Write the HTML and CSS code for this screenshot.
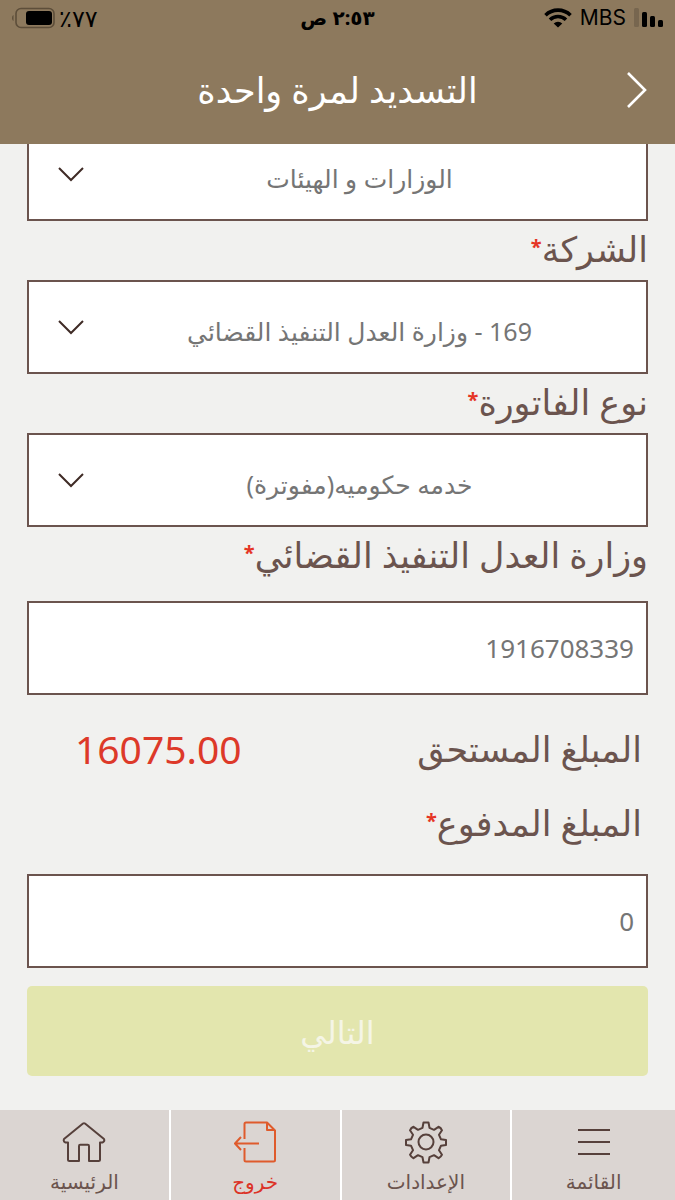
FILE: index.html
```html
<!DOCTYPE html>
<html lang="ar" dir="rtl">
<head>
<meta charset="utf-8">
<meta name="viewport" content="width=device-width, initial-scale=1">
<title>التسديد لمرة واحدة</title>
<link rel="stylesheet" href="styles.css">
</head>
<body>
<header class="header">
  <div class="status">
    <div class="status-side">
      <svg width="30" height="20" viewBox="0 0 30 20" aria-hidden="true"><rect x="0" y="0" width="5" height="19" rx="1.5" fill="#77664f"/><rect x="8" y="4" width="5" height="15" rx="1.5"/><rect x="16" y="8" width="5" height="11" rx="1.5"/><rect x="24" y="12" width="5" height="7" rx="1.5"/></svg>
      <span class="carrier">MBS</span>
      <svg width="28" height="20" viewBox="0 0 28 20" fill="none" stroke="#000" stroke-width="3.6" aria-hidden="true"><path d="M1.5 7.2a18 18 0 0 1 25 0M6 11.7a11.5 11.5 0 0 1 16 0"/><path d="M9.7 15.4a6.2 6.2 0 0 1 8.600 0L14 19.600z" fill="#000" stroke="none"/></svg>
    </div>
    <span class="clock">٢:٥٣ ص</span>
    <div class="status-side status-end">
      <span class="percent">٧٧٪</span>
      <svg width="44" height="22" viewBox="0 0 44 22" aria-hidden="true"><path d="M2.500 8v6C.6 13.500.6 8.500 2.500 8z" fill="#5d4e3a"/><rect x="5" y="1.500" width="38" height="19" rx="5" fill="none" stroke="#5d4e3a" stroke-width="1.600"/><rect x="15" y="4" width="26" height="14" rx="3"/></svg>
    </div>
  </div>
  <div class="titlebar">
    <button class="back" type="button" aria-label="رجوع"><svg width="22" height="38" viewBox="0 0 22 38" fill="none" stroke="#fff" stroke-width="2.600"><path d="M2 2l17 17L2 36"/></svg></button>
    <h1 class="title">التسديد لمرة واحدة</h1>
  </div>
</header>

<main class="main">
  <form class="form">
    <div class="picker">
      <select class="box select" aria-label="الفئة"><option>الوزارات و الهيئات</option></select>
      <svg class="chevron" viewBox="0 0 26 15" aria-hidden="true"><path d="M1 1l12 12L25 1"/></svg>
    </div>
    <label class="label" for="company">الشركة<span class="star">*</span></label>
    <div class="picker">
      <select class="box select" id="company"><option>169 - وزارة العدل التنفيذ القضائي</option></select>
      <svg class="chevron" viewBox="0 0 26 15" aria-hidden="true"><path d="M1 1l12 12L25 1"/></svg>
    </div>
    <label class="label" for="bill">نوع الفاتورة<span class="star">*</span></label>
    <div class="picker">
      <select class="box select" id="bill"><option>خدمه حكوميه(مفوترة)</option></select>
      <svg class="chevron" viewBox="0 0 26 15" aria-hidden="true"><path d="M1 1l12 12L25 1"/></svg>
    </div>
    <label class="label label-tall" for="number">وزارة العدل التنفيذ القضائي<span class="star">*</span></label>
    <input class="box input" id="number" type="text" inputmode="numeric" value="1916708339">
    <div class="amounts">
      <div class="due"><span>المبلغ المستحق</span><output class="due-value">16075.00</output></div>
      <label class="paid" for="paid">المبلغ المدفوع<span class="star">*</span></label>
    </div>
    <input class="box input" id="paid" type="text" inputmode="decimal" value="0">
    <button class="next" type="button">التالي</button>
  </form>
</main>

<nav class="nav">
  <a class="tab" href="#menu">
    <svg class="icon" viewBox="0 0 44 44" aria-hidden="true"><path d="M6 10h32M6 22h32M6 34h32"/></svg>
    <span>القائمة</span>
  </a>
  <a class="tab" href="#settings">
    <svg class="icon" viewBox="0 0 44 44" aria-hidden="true"><circle cx="22" cy="22" r="7.500"/><path d="M19.500 2.500h5l1 5.300 4.500 2 4.500-3q2.500 1 3.500 3.500l-3 4.500 2 4.500 5 .7v5l-5 .7-2 4.500 3 4.500q-1 2.500-3.500 3.500l-4.500-3-4.500 2-1 5.300h-5l-1-5.300-4.500-2-4.500 3q-2.500-1-3.500-3.500l3-4.500-2-4.500-5-.7v-5l5-.7 2-4.500-3-4.500q1-2.500 3.500-3.500l4.500 3 4.500-2z"/></svg>
    <span>الإعدادات</span>
  </a>
  <a class="tab tab-exit" href="#logout">
    <svg class="icon" viewBox="0 0 44 44" aria-hidden="true"><path d="M11.500 19V4q0-1.500 1.500-1.500h21l8 8V40q0 1.500-1.500 1.500H13q-1.500 0-1.500-1.500V28M34 2.500v7.500h8M26 23.500H2M8 17l-6 6.500L8 30"/></svg>
    <span>خروج</span>
  </a>
  <a class="tab" href="#home">
    <svg class="icon" viewBox="0 0 44 44" aria-hidden="true"><path d="M6 22.500v17q0 1.500 1.500 1.500H17V26q0-1.200 1.200-1.200h7.600q1.200 0 1.200 1.200v15h9.500q1.500 0 1.500-1.500v-17h2.500q2.500-1 1.500-3.500L23 3.500q-1-.7-2 0L2 19q-1 2.500 1.500 3.500z"/></svg>
    <span>الرئيسية</span>
  </a>
</nav>
</body>
</html>
```

FILE: styles.css
```css
* { box-sizing: border-box; }

body {
  margin: 0;
  min-height: 100vh;
  display: flex;
  flex-direction: column;
  background: #f1f1ef;
  color: #6b544e;
  font-family: "Noto Sans", "DejaVu Sans", sans-serif;
}

button, input, select { font: inherit; }

.header {
  position: sticky;
  top: 0;
  z-index: 1;
  height: 144px;
  background: #8d795d;
}

.status {
  display: grid;
  grid-template-columns: 1fr auto 1fr;
  align-items: center;
  height: 36px;
  padding: 0 11px;
  color: #000;
  font-size: 22px;
  line-height: 36px;
}

.status-side { display: flex; align-items: center; gap: 8px; }
.status-end { justify-content: flex-end; gap: 4px; }
.carrier { font-family: Inter, sans-serif; font-size: 21px; }
.clock { font-weight: 700; font-size: 20px; }
.percent { font-size: 24px; }

.titlebar {
  display: grid;
  grid-template-columns: 40px 1fr 40px;
  align-items: center;
  height: 108px;
  padding: 0 18px;
}

.back {
  display: flex;
  justify-content: center;
  padding: 0;
  border: 0;
  background: none;
}

.title {
  margin: 0;
  color: #fff;
  font-size: 35px;
  font-weight: 400;
  line-height: 48px;
  text-align: center;
}

.main { flex: 1; padding: 0 27px 34px; }

/* The list rests partly scrolled beneath the header. */
.form { display: flex; flex-direction: column; margin-top: -17px; }

.box {
  width: 100%;
  height: 94px;
  border: 2px solid #6b544e;
  border-radius: 0;
  background: #fff;
  color: #757575;
}

.picker { display: grid; align-items: center; }
.picker > * { grid-area: 1 / 1; }

.select {
  appearance: none;
  padding: 8px 0 0 44px;
  font-size: 25px;
  text-align: center;
  text-align-last: center;
}

.chevron {
  justify-self: end;
  width: 26px;
  height: 15px;
  margin-left: 31px;
  fill: none;
  stroke: #3f2b26;
  stroke-width: 2;
  pointer-events: none;
}

.label { height: 59px; font-size: 35px; line-height: 56px; }
.label-tall { height: 74px; }

.star {
  color: #e53525;
  font-size: 20px;
  font-weight: 700;
  line-height: 0;
  vertical-align: 8px;
}

.input { padding: 0 12px; font-size: 26px; }

.amounts { padding: 17px 6px 14px; }

.due {
  display: flex;
  justify-content: space-between;
  align-items: center;
  height: 74px;
  padding-left: 42px;
  font-size: 35px;
  line-height: 74px;
}

.due-value { color: #dd3929; font-size: 39px; }
.paid { display: block; height: 74px; font-size: 35px; line-height: 74px; }

.next {
  height: 90px;
  margin-top: 18px;
  border: 0;
  border-radius: 5px;
  background: #e3e6ae;
  color: #f5f5e6;
  font-size: 32px;
}

.nav {
  position: sticky;
  bottom: 0;
  display: grid;
  grid-template-columns: 163fr 169fr 169fr 169fr;
  gap: 2px;
  background: #fff;
}

.tab {
  display: flex;
  flex-direction: column;
  align-items: center;
  height: 90px;
  padding-top: 10px;
  background: #dbd5d2;
  color: #6b544e;
  font-size: 20px;
  line-height: 36px;
  text-decoration: none;
}

.icon {
  width: 44px;
  height: 44px;
  fill: none;
  stroke: #56403b;
  stroke-width: 2;
  stroke-linejoin: round;
}

.tab-exit { color: #dc3327; }
.tab-exit .icon { stroke: #df5b2c; }
```
